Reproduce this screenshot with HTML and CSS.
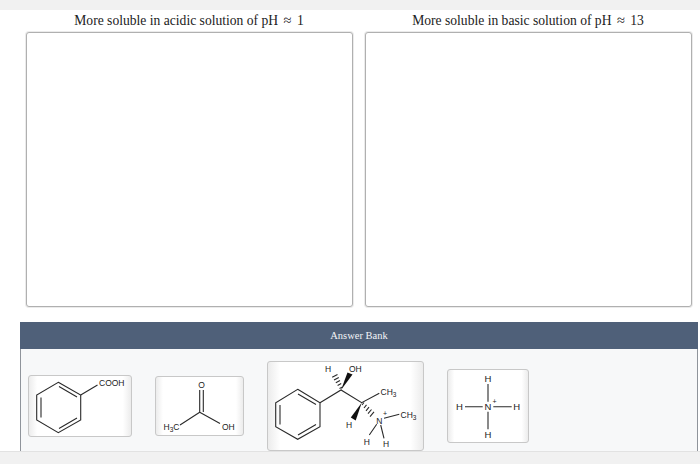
FILE: index.html
```html
<!DOCTYPE html>
<html lang="en">
<head>
  <meta charset="UTF-8">
  <title>Answer Bank</title>
  <link rel="stylesheet" href="styles.css">
</head>
<body>
  <div class="page">
    <div class="top-bar"></div>

    <div class="bins">
      <div class="bin">
        <div class="bin-title">More soluble in acidic solution of pH <span class="approx">≈</span> 1</div>
        <div class="bin-box"></div>
      </div>
      <div class="bin">
        <div class="bin-title">More soluble in basic solution of pH <span class="approx">≈</span> 13</div>
        <div class="bin-box"></div>
      </div>
    </div>

    <div class="bank">
      <div class="bank-header">Answer Bank</div>
      <div class="bank-items">

        <!-- benzoic acid -->
        <div class="card">
          <svg class="mol" width="102" height="60" viewBox="1 1 102 60">
            <path d="M30.3 7.3 52.7 20V45L30.3 57.7 8.7 45V20Z"/>
            <path d="M13 22.5V42.5M31 11.5 49 22M49 43 31 53.5M52.7 20 69.5 10"/>
            <text x="71" y="11">COOH</text>
          </svg>
        </div>

        <!-- acetic acid -->
        <div class="card">
          <svg class="mol" width="87" height="58" viewBox="1 1 87 58">
            <path d="M44.7 36.3 25 49M44.7 36.3 65 47.5M44.7 36.3V14M48.3 36V14"/>
            <text x="46.5" y="11.5" class="mid">O</text>
            <text x="8.5" y="54">H<tspan class="sub" dy="2">3</tspan><tspan dy="-2">C</tspan></text>
            <text x="67" y="54">OH</text>
          </svg>
        </div>

        <!-- ephedrine salt -->
        <div class="card">
          <svg class="mol" width="155" height="88" viewBox="1 1 155 88">
            <path d="M30.7 28.3 53 41.7V65.7L30.7 78.3 8.7 65.7V41.7Z"/>
            <path d="M13 44V63.5M31 33 49 43.5M49 63.5 31 74M53 41.7 74 29 94.7 41.7 112.3 32.3M117 57.3 132.3 53.3M109.7 63.3 102.3 74M113.7 64 117 77.3"/>
            <path class="solid" d="M74 29 80.5 11.5 85.5 13.5Z"/>
            <path class="solid" d="M94.7 41.7 83.8 56.5 88.7 59.5Z"/>
            <path class="hash" d="M72.5 27.5 75.5 26M70.6 24.5 74.2 22.6M68.8 21.7 73 19.5M67 19 71.8 16.4M65.2 16.2 70.5 13.4"/>
            <path class="hash" d="M97 41.5 95 44M99.5 43.8 97 47M102 46.2 99 49.8M104.5 48.5 101 52.7M107 50.8 103 55.6"/>
            <text x="58" y="11">H</text>
            <text x="82" y="11">OH</text>
            <text x="113.5" y="33.5">CH<tspan class="sub" dy="2">3</tspan></text>
            <text x="79" y="66.5">H</text>
            <text x="112.3" y="62.5" class="mid">N</text>
            <text x="118" y="55" class="mid plus">+</text>
            <text x="133.5" y="56.5">CH<tspan class="sub" dy="2">3</tspan></text>
            <text x="99.7" y="83.5" class="mid">H</text>
            <text x="119" y="86" class="mid">H</text>
          </svg>
        </div>

        <!-- ammonium -->
        <div class="card">
          <svg class="mol mol-large" width="80" height="72" viewBox="1 1 80 72">
            <path d="M41 15V32.7M41 42.7V60.3M18 37.7H35.7M46.3 37.7H64.7"/>
            <text x="41" y="12.5" class="mid">H</text>
            <text x="41" y="41" class="mid">N</text>
            <text x="47.5" y="34.5" class="mid plus">+</text>
            <text x="12.5" y="41" class="mid">H</text>
            <text x="69.7" y="41" class="mid">H</text>
            <text x="41" y="69" class="mid">H</text>
          </svg>
        </div>

      </div>
    </div>

    <div class="footer"></div>
  </div>
</body>
</html>
```

FILE: styles.css
```css
html, body {
  margin: 0;
  padding: 0;
}

body {
  background-color: #ffffff;
  font-family: "Liberation Serif", "Times New Roman", serif;
  color: #222222;
}

.page {
  width: 700px;
  height: 464px;
  display: flex;
  flex-direction: column;
  overflow: hidden;
}

.top-bar {
  height: 10px;
  background-color: #f1f1f1;
}

.bins {
  display: flex;
  gap: 12px;
  padding-left: 26px;
}

.bin {
  width: 327px;
}

.bin-title {
  height: 22px;
  line-height: 21px;
  font-size: 13.6px;
  text-align: center;
  margin-left: -1px;
}

.approx {
  margin: 0 2px;
  font-size: 14.5px;
}

.bin-box {
  box-sizing: border-box;
  height: 275px;
  background-color: #ffffff;
  border: 1px solid #b0b0b0;
  border-radius: 3px;
  box-shadow: 0 0 0 1px rgba(190, 190, 190, 0.3);
}

.bank {
  box-sizing: border-box;
  width: 678px;
  height: 129px;
  margin: 15px 0 0 20px;
  display: flex;
  flex-direction: column;
  background-color: #f7f8f9;
  border-left: 1px solid #8f949b;
  border-right: 1px solid #8f949b;
}

.bank-header {
  height: 27px;
  line-height: 27px;
  margin: 0 -1px;
  background-color: #4f6079;
  color: #f2f4f7;
  font-size: 10.5px;
  text-align: center;
}

.bank-items {
  display: flex;
  align-items: center;
  gap: 23px;
  padding: 12px 0 0 7px;
  height: 90px;
}

.card {
  display: flex;
  background: linear-gradient(to right, #ececec, #ffffff 8%, #ffffff 92%, #ececec);
  border: 1px solid #c8c8c8;
  border-radius: 3px;
}

.mol path {
  fill: none;
  stroke: #2a2a2a;
  stroke-width: 1.1;
}

.mol path.solid {
  fill: #111111;
  stroke: none;
}

.mol text {
  font-family: "Liberation Sans", Arial, sans-serif;
  font-size: 8.5px;
  fill: #222222;
}

.mol-large text {
  font-size: 9.5px;
}

.mol .mid {
  text-anchor: middle;
}

.mol .sub {
  font-size: 6.5px;
}

.mol .plus {
  font-size: 7px;
}

.footer {
  flex: 1;
  background-color: #f1f1f1;
  border-top: 1px solid #e2e2e2;
}
```
